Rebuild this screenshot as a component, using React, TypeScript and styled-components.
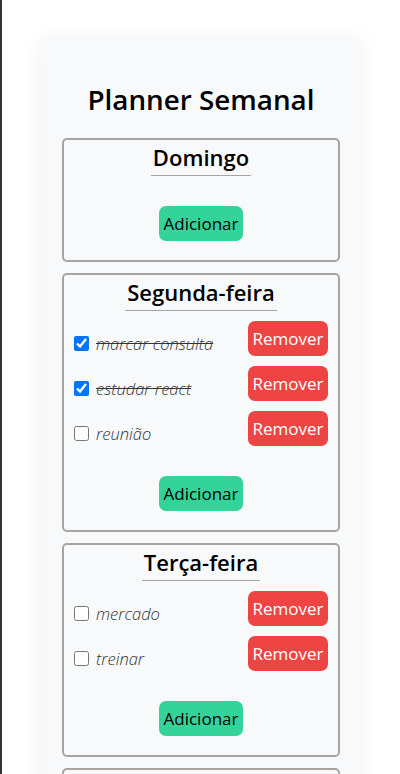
import React, { useState } from "react";
import styled, { createGlobalStyle } from "styled-components";

const GlobalStyle = createGlobalStyle`
  html, body {
    margin: 0;
    padding: 0;
    background: #ffffff;
  }
  body {
    border-left: 2px solid #333333;
    min-height: 774px;
    box-sizing: border-box;
    font-family: "Open Sans", "Noto Sans", sans-serif;
    color: #000;
  }
`;

const Card = styled.main`
  width: 320px;
  box-sizing: border-box;
  margin: 39px auto 0;
  padding: 42px 21px 20px;
  background: #f8f9fb;
  border-radius: 8px;
  box-shadow: 0 0 22px rgba(0, 0, 0, 0.06);
`;

const Title = styled.h1`
  margin: 0 0 21px;
  font-size: 27.8px;
  line-height: 36px;
  font-weight: 600;
  text-align: center;
`;

const DayList = styled.div`
  display: flex;
  flex-direction: column;
  gap: 11px;
`;

const DayBox = styled.section`
  border: 2px solid #a8a4a1;
  border-radius: 5px;
  padding: 4px 10px 19px;
  display: flex;
  flex-direction: column;
  align-items: center;
`;

const DayHeading = styled.h2`
  margin: 0;
  font-size: 22px;
  line-height: 26px;
  font-weight: 600;
  padding: 0 2px 5px;
  border-bottom: 1px solid #a8a4a1;
`;

const Tasks = styled.ul`
  list-style: none;
  margin: 0;
  padding: 0;
  align-self: stretch;
`;

const TaskRow = styled.li`
  display: flex;
  align-items: center;
  justify-content: space-between;
  margin-top: 10px;
  height: 35px;
`;

const TaskLabel = styled.label`
  display: flex;
  align-items: center;
  gap: 7px;
  padding-top: 9px;
`;

const Check = styled.input`
  margin: 0;
  width: 15px;
  height: 15px;
`;

const TaskText = styled.span<{ $done: boolean }>`
  font-size: 16.5px;
  font-style: italic;
  font-weight: 300;
  color: #333;
  text-decoration: ${(p) => (p.$done ? "line-through" : "none")};
`;

const Button = styled.button<{ $variant: "add" | "remove" }>`
  font-family: "Open Sans", "Noto Sans", sans-serif;
  font-size: 17px;
  line-height: 24px;
  height: 35px;
  padding: 0 4.5px;
  border: none;
  border-radius: 7px;
  cursor: pointer;
  background: ${(p) => (p.$variant === "add" ? "#34d399" : "#ef4444")};
  color: ${(p) => (p.$variant === "add" ? "#000" : "#fff")};
`;

const AddButton = styled(Button)`
  margin-top: 30px;
`;

type Task = { text: string; done: boolean };
type Day = { name: string; tasks: Task[] };

const initialDays: Day[] = [
  { name: "Domingo", tasks: [] },
  {
    name: "Segunda-feira",
    tasks: [
      { text: "marcar consulta", done: true },
      { text: "estudar react", done: true },
      { text: "reunião", done: false },
    ],
  },
  {
    name: "Terça-feira",
    tasks: [
      { text: "mercado", done: false },
      { text: "treinar", done: false },
    ],
  },
  { name: "Quarta-feira", tasks: [] },
  { name: "Quinta-feira", tasks: [] },
  { name: "Sexta-feira", tasks: [] },
  { name: "Sábado", tasks: [] },
];

export default function App() {
  const [days, setDays] = useState<Day[]>(initialDays);

  const toggle = (d: number, t: number) =>
    setDays((prev) =>
      prev.map((day, i) =>
        i !== d
          ? day
          : {
              ...day,
              tasks: day.tasks.map((task, j) =>
                j === t ? { ...task, done: !task.done } : task
              ),
            }
      )
    );

  const remove = (d: number, t: number) =>
    setDays((prev) =>
      prev.map((day, i) =>
        i !== d ? day : { ...day, tasks: day.tasks.filter((_, j) => j !== t) }
      )
    );

  const add = (d: number) => {
    const text = window.prompt("Nova tarefa");
    if (!text) return;
    setDays((prev) =>
      prev.map((day, i) =>
        i !== d ? day : { ...day, tasks: [...day.tasks, { text, done: false }] }
      )
    );
  };

  return (
    <>
      <GlobalStyle />
      <Card>
        <Title>Planner Semanal</Title>
        <DayList>
          {days.map((day, d) => (
            <DayBox key={day.name}>
              <DayHeading>{day.name}</DayHeading>
              <Tasks>
                {day.tasks.map((task, t) => (
                  <TaskRow key={task.text + t}>
                    <TaskLabel>
                      <Check
                        type="checkbox"
                        checked={task.done}
                        onChange={() => toggle(d, t)}
                      />
                      <TaskText $done={task.done}>{task.text}</TaskText>
                    </TaskLabel>
                    <Button $variant="remove" onClick={() => remove(d, t)}>
                      Remover
                    </Button>
                  </TaskRow>
                ))}
              </Tasks>
              <AddButton $variant="add" onClick={() => add(d)}>
                Adicionar
              </AddButton>
            </DayBox>
          ))}
        </DayList>
      </Card>
    </>
  );
}
